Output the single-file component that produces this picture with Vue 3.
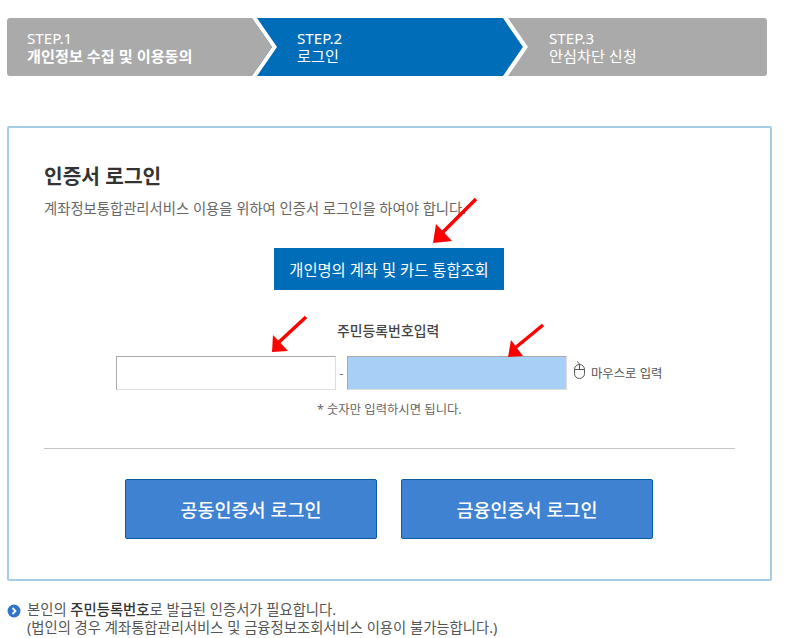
<template>
  <div class="page">
    <ol class="steps">
      <li v-for="s in steps" :key="s.no" class="step" :class="{ on: s.on, first: s.no === 1 }">
        <span>STEP.{{ s.no }}</span>
        <span :class="{ strong: s.no === 1 }">{{ s.label }}</span>
      </li>
      <svg class="chev" style="left: 245px" width="26" height="58" viewBox="0 0 26 58"><path d="M0 0H5L25 29 5 58H0L20 29Z" fill="#fff" /><path d="M0 0H0L20 29 0 58Z" fill="#aaa" /></svg>
      <svg class="chev" style="left: 496px" width="26" height="58" viewBox="0 0 26 58"><path d="M0 0L20 29 0 58Z" fill="#006db8" /><path d="M0 0H5L25 29 5 58H0L20 29Z" fill="#fff" /></svg>
    </ol>

    <section class="box">
      <h2>인증서 로그인</h2>
      <p class="desc">계좌정보통합관리서비스 이용을 위하여 인증서 로그인을 하여야 합니다.</p>
      <div class="center">
        <button class="lookup">개인명의 계좌 및 카드 통합조회</button>
      </div>
      <div class="label">주민등록번호입력</div>
      <div class="inputs">
        <div class="field"></div>
        <span class="dash">-</span>
        <div class="field secure"></div>
        <svg class="mouse" width="14" height="20" viewBox="0 0 14 20" fill="none" stroke="#555" stroke-width="1">
          <rect x="1.5" y="3.5" width="10" height="14" rx="5" />
          <path d="M1.5 8.5H11.5M6.5 3.5V8.5M6.5 3.5C6.5 2 5 1.5 4 0.5" />
        </svg>
        <span class="mouse-text">마우스로 입력</span>
      </div>
      <p class="hint">* 숫자만 입력하시면 됩니다.</p>
      <hr />
      <div class="actions">
        <button class="cert">공동인증서 로그인</button>
        <button class="cert">금융인증서 로그인</button>
      </div>
    </section>

    <div class="note">
      <svg class="bullet" width="14" height="14" viewBox="0 0 14 14">
        <circle cx="7" cy="7" r="6.5" fill="#2f74c6" />
        <path d="M5.5 4L8.5 7 5.5 10" fill="none" stroke="#fff" stroke-width="1.8" />
      </svg>
      <p>본인의 <b>주민등록번호</b>로 발급된 인증서가 필요합니다.<br />(법인의 경우 계좌통합관리서비스 및 금융정보조회서비스 이용이 불가능합니다.)</p>
    </div>

    <svg class="arrow" style="left: 430px; top: 195px" width="50" height="50" viewBox="0 0 50 50"><path d="M46 4L10 40" stroke="#f00" stroke-width="3.5" /><path d="M3 48L6 29 22 46Z" fill="#f00" /></svg>
    <svg class="arrow" style="left: 268px; top: 312px" width="44" height="44" viewBox="0 0 44 44"><path d="M38 5L10 31" stroke="#f00" stroke-width="3.5" /><path d="M4 40L5 23 20 39Z" fill="#f00" /></svg>
    <svg class="arrow" style="left: 504px; top: 322px" width="44" height="38" viewBox="0 0 44 38"><path d="M39 3L11 26" stroke="#f00" stroke-width="3.5" /><path d="M4 35L7 18 19 34Z" fill="#f00" /></svg>
  </div>
</template>

<script setup>
const steps = [
  { no: 1, label: '개인정보 수집 및 이용동의' },
  { no: 2, label: '로그인', on: true },
  { no: 3, label: '안심차단 신청' },
]
</script>

<style>
body { background: #fff; overflow: hidden; }
</style>

<style scoped>
.page {
  position: relative;
  width: 797px;
  height: 638px;
  overflow: hidden;
  padding: 18px 0 0 7px;
  box-sizing: border-box;
  font-family: "Noto Sans", "Noto Sans CJK KR", sans-serif;
  color: #555;
}
.steps {
  position: relative;
  display: flex;
  width: 760px;
  height: 58px;
  margin: 0;
  padding: 0;
  list-style: none;
  border-radius: 3px;
  overflow: hidden;
}
.step {
  display: flex;
  flex-direction: column;
  justify-content: center;
  width: 251px;
  box-sizing: border-box;
  padding-left: 40px;
  background: #aaa;
  color: #fff;
  font-size: 15.2px;
  line-height: 18px;
}
.step.first { width: 250px; padding-left: 20px; }
.step:last-of-type { flex: 1; padding-left: 41px; }
.step.on { background: #006db8; }
.strong { font-weight: 700; }
.chev { position: absolute; top: 0; }

.box {
  width: 765px;
  height: 455px;
  margin-top: 50px;
  padding: 34px 35px 0;
  box-sizing: border-box;
  border: 2px solid #a6cde6;
  border-radius: 2px;
}
h2 {
  margin: 0;
  font-size: 20.3px;
  line-height: 28px;
  font-weight: 700;
  color: #333;
}
.desc {
  margin: 9px 0 0;
  font-size: 14.35px;
  line-height: 20px;
  color: #666;
}
.center { display: flex; justify-content: center; margin-top: 29px; padding-right: 1px; }
.lookup {
  width: 230px;
  height: 42px;
  padding: 0;
  border: 0;
  background: #006db8;
  color: #fff;
  font: inherit;
  font-size: 15.35px;
}
.label {
  margin-top: 31px;
  margin-left: 293px;
  font-size: 13.9px;
  line-height: 20px;
  font-weight: 500;
  color: #444;
}
.inputs {
  display: flex;
  align-items: center;
  height: 34px;
  margin-top: 15px;
  margin-left: 72px;
}
.field {
  width: 220px;
  height: 34px;
  box-sizing: border-box;
  border: 1px solid #ddd;
  border-top-color: #aaa;
  border-left-color: #aaa;
  background: #fff;
}
.field.secure { background: #a8cff5; }
.dash { width: 11px; font-size: 12px; text-align: center; color: #666; }
.mouse { margin: 0 4px 4px 6px; }
.mouse-text { font-size: 12.35px; color: #555; }
.hint {
  margin: 11px 0 0 273px;
  font-size: 12.35px;
  line-height: 18px;
  color: #666;
}
hr {
  height: 1px;
  margin: 29px 0 0;
  border: 0;
  background: #c6c6c6;
}
.actions {
  display: flex;
  gap: 24px;
  margin-top: 30px;
  margin-left: 81px;
}
.cert {
  width: 252px;
  height: 60px;
  padding: 0;
  border: 1px solid #0a5ca0;
  border-radius: 2px;
  background: #3f82d1;
  color: #fff;
  font: inherit;
  font-size: 18.5px;
  font-weight: 500;
}
.note {
  display: flex;
  gap: 6px;
  margin-top: 20px;
}
.bullet { flex: none; margin-top: 3px; }
.note p {
  margin: 0;
  font-size: 14.35px;
  line-height: 18px;
  color: #555;
}
.note b { font-weight: 500; color: #333; }
.arrow { position: absolute; }
</style>
